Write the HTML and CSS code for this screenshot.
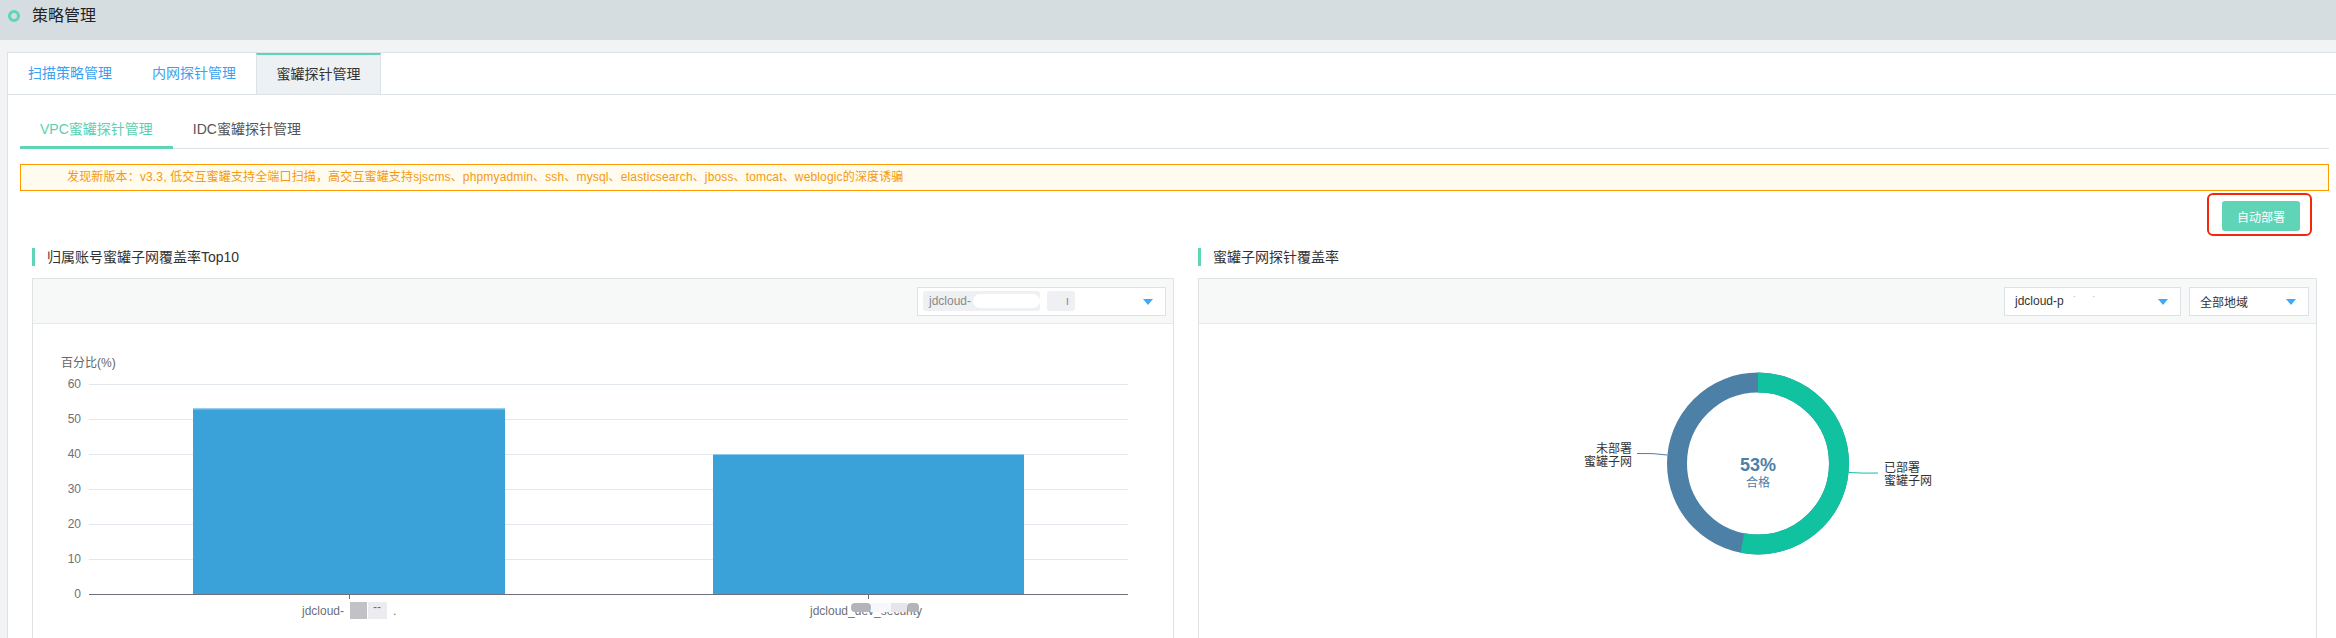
FILE: index.html
```html
<!DOCTYPE html>
<html lang="zh-CN">
<head>
<meta charset="utf-8">
<title>策略管理</title>
<link rel="stylesheet" href="styles.css">
</head>
<body>
<header class="topbar">
  <span class="dot"></span>
  <span class="page-title">策略管理</span>
</header>
<div class="page">
  <div class="card">
    <nav class="tabs">
      <div class="tab">扫描策略管理</div>
      <div class="tab">内网探针管理</div>
      <div class="tab active">蜜罐探针管理</div>
    </nav>
    <div class="card-body">
      <div class="subtabs">
        <div class="subtab active">VPC蜜罐探针管理</div>
        <div class="subtab">IDC蜜罐探针管理</div>
      </div>
      <div class="alert">发现新版本：v3.3, 低交互蜜罐支持全端口扫描，高交互蜜罐支持sjscms、phpmyadmin、ssh、mysql、elasticsearch、jboss、tomcat、weblogic的深度诱骗</div>
      <div class="actions">
        <div class="highlight"><button class="btn">自动部署</button></div>
      </div>
      <div class="charts">
        <section class="chart-col">
          <h3 class="sec-title">归属账号蜜罐子网覆盖率Top10</h3>
          <div class="panel">
            <div class="panel-head">
              <div class="select select-wide">
                <span class="chip chip-main">jdcloud-<span class="smear"></span></span>
                <span class="chip chip-small">ı</span>
                <span class="arrow"></span>
              </div>
            </div>
            <div class="panel-body">
              <svg class="chart" width="1140" height="320" viewBox="0 0 1140 320">
                <text class="axis-name" x="28" y="43">百分比(%)</text>
                <g class="grid">
                  <line x1="56" y1="60.5" x2="1095" y2="60.5"/>
                  <line x1="56" y1="95.5" x2="1095" y2="95.5"/>
                  <line x1="56" y1="130.5" x2="1095" y2="130.5"/>
                  <line x1="56" y1="165.5" x2="1095" y2="165.5"/>
                  <line x1="56" y1="200.5" x2="1095" y2="200.5"/>
                  <line x1="56" y1="235.5" x2="1095" y2="235.5"/>
                </g>
                <g class="ylabels">
                  <text x="48" y="64">60</text>
                  <text x="48" y="99">50</text>
                  <text x="48" y="134">40</text>
                  <text x="48" y="169">30</text>
                  <text x="48" y="204">20</text>
                  <text x="48" y="239">10</text>
                  <text x="48" y="274">0</text>
                </g>
                <rect class="bar" x="160" y="84.5" width="312" height="185.5"/>
                <line class="bar-edge" x1="160" y1="85" x2="472" y2="85"/>
                <rect class="bar" x="680" y="130" width="311" height="140"/>
                <line class="bar-edge" x1="680" y1="130.5" x2="991" y2="130.5"/>
                <line class="axis" x1="56" y1="270.5" x2="1095" y2="270.5"/>
                <line class="axis" x1="316.5" y1="270" x2="316.5" y2="275"/>
                <line class="axis" x1="835.5" y1="270" x2="835.5" y2="275"/>
                <text class="xlabel" x="269" y="291">jdcloud-</text>
                <rect x="317" y="278" width="17" height="17" fill="#c2c2c6"/>
                <rect x="335" y="278" width="19" height="17" fill="#ececf0"/>
                <text class="xlabel" x="340" y="287">--</text>
                <text class="xlabel" x="360" y="291">.</text>
                <text class="xlabel" x="777" y="291">jdcloud_dev_security</text>
                <rect x="818" y="279" width="20" height="9" rx="4" fill="#b4b4b8"/>
                <rect x="838" y="279" width="20" height="9" fill="#f8f8fa"/>
                <rect x="858" y="279" width="16" height="9" fill="#e6e6ea"/>
                <rect x="874" y="279" width="12" height="9" rx="4" fill="#b4b4b8"/>
              </svg>
            </div>
          </div>
        </section>
        <section class="chart-col">
          <h3 class="sec-title">蜜罐子网探针覆盖率</h3>
          <div class="panel">
            <div class="panel-head">
              <div class="select select-acct">
                <span class="sel-text">jdcloud-p<span class="faint"> ˙ ˙</span></span>
                <span class="arrow"></span>
              </div>
              <div class="select select-region">
                <span class="sel-text">全部地域</span>
                <span class="arrow"></span>
              </div>
            </div>
            <div class="panel-body">
              <svg class="chart" width="1117" height="320" viewBox="0 0 1117 320">
                <circle class="ring ring-blue" cx="559" cy="139.5" r="81"/>
                <circle class="ring ring-green" cx="559" cy="139.5" r="81" stroke-dasharray="269.74 508.94" transform="rotate(-90 559 139.5)"/>
                <path class="lead lead-blue" d="M468 131 Q455 129 438 129.5"/>
                <path class="lead lead-green" d="M650 148.5 Q665 149.5 679 149"/>
                <text class="pie-label" text-anchor="end" x="433" y="129">未部署</text>
                <text class="pie-label" text-anchor="end" x="433" y="142">蜜罐子网</text>
                <text class="pie-label" x="685" y="148">已部署</text>
                <text class="pie-label" x="685" y="161">蜜罐子网</text>
                <text class="pie-value" text-anchor="middle" x="559" y="147">53%</text>
                <text class="pie-sub" text-anchor="middle" x="559" y="163">合格</text>
              </svg>
            </div>
          </div>
        </section>
      </div>
    </div>
  </div>
</div>
</body>
</html>
```

FILE: styles.css
```css
* { box-sizing: border-box; }
html, body { margin: 0; padding: 0; }
body {
  width: 2336px;
  height: 638px;
  overflow: hidden;
  background: #f2f3f5;
  font-family: "Liberation Sans", "Noto Sans CJK SC", sans-serif;
  color: #333;
}
.topbar {
  height: 40px;
  background: #d6dde0;
  display: flex;
  align-items: center;
  padding: 0 0 8px 8px;
}
.dot {
  width: 12px;
  height: 12px;
  border: 3px solid #5dd5b6;
  border-radius: 50%;
  margin-right: 12px;
}
.page-title {
  font-size: 16px;
  color: #222;
  line-height: 18px;
}
.page { padding: 12px 0 0 7px; }
.card {
  width: 2335px;
  height: 600px;
  background: #fff;
  border: 1px solid #dbe2e8;
}
.tabs {
  display: flex;
  height: 42px;
  border-bottom: 1px solid #dbe2e8;
}
.tab {
  width: 124px;
  text-align: center;
  font-size: 14px;
  line-height: 41px;
  color: #3ba1f0;
}
.tab.active {
  width: 125px;
  background: #edf1f4;
  color: #333;
  border-top: 2px solid #5dd5b6;
  border-left: 1px solid #dbe2e8;
  border-right: 1px solid #dbe2e8;
  line-height: 38px;
}
.card-body { padding: 12px 12px 0; }
.subtabs {
  display: flex;
  border-bottom: 1px solid #dbe2e8;
}
.subtab {
  padding: 14px 20px 9px;
  line-height: 16px;
  font-size: 14px;
  color: #555;
  border-bottom: 3px solid transparent;
  margin-bottom: -1px;
}
.subtab.active {
  color: #5ccfb1;
  border-bottom-color: #5dd5b6;
}
.alert {
  margin-top: 15px;
  height: 27px;
  border: 1px solid #ff9a00;
  background: #fffbee;
  color: #f59a12;
  font-size: 12px;
  line-height: 25px;
  padding-left: 46px;
  letter-spacing: 0.15px;
  white-space: nowrap;
}
.actions {
  display: flex;
  justify-content: flex-end;
  padding-right: 17px;
  margin-top: 2px;
}
.highlight {
  border: 2px solid #f5260b;
  border-radius: 6px;
  padding: 6px 10px 3px 13px;
}
.btn {
  display: block;
  width: 78px;
  height: 30px;
  border: none;
  border-radius: 3px;
  background: #5fd4b6;
  color: #fff;
  font-family: "Liberation Sans", "Noto Sans CJK SC", sans-serif;
  font-size: 12px;
  padding: 0;
}
.charts {
  display: grid;
  grid-template-columns: 1142px 1119px;
  column-gap: 24px;
  padding-left: 12px;
  margin-top: 12px;
}
.sec-title {
  margin: 0 0 12px;
  height: 18px;
  line-height: 18px;
  border-left: 3px solid #5dd5b6;
  padding-left: 12px;
  font-size: 14px;
  font-weight: normal;
  color: #333;
}
.panel {
  border: 1px solid #dfe3e6;
  height: 400px;
}
.panel-head {
  height: 45px;
  background: #f7f8f8;
  border-bottom: 1px solid #e6e9eb;
  display: flex;
  justify-content: flex-end;
  align-items: center;
  gap: 8px;
  padding-right: 7px;
}
.select {
  height: 29px;
  background: #fff;
  border: 1px solid #dbe2e8;
  display: flex;
  align-items: center;
  position: relative;
  font-size: 12px;
}
.select-wide { width: 249px; padding-left: 5px; }
.select-acct { width: 177px; padding-left: 10px; }
.select-region { width: 120px; padding-left: 10px; }
.chip {
  height: 20px;
  line-height: 20px;
  background: #eef0f3;
  border-radius: 3px;
  color: #8a8a8a;
  display: flex;
  align-items: center;
}
.chip-main { width: 117px; padding-left: 6px; }
.smear {
  width: 70px;
  height: 14px;
  margin-left: 2px;
  background: #fff;
  border-radius: 7px;
}
.chip-small {
  width: 28px;
  margin-left: 7px;
  justify-content: flex-end;
  padding-right: 6px;
}
.sel-text { color: #333; }
.faint { color: #bbb; letter-spacing: 6px; }
.arrow {
  position: absolute;
  right: 12px;
  top: 11px;
  width: 0;
  height: 0;
  border-left: 5.5px solid transparent;
  border-right: 5.5px solid transparent;
  border-top: 6px solid #3fa9f5;
}
.chart { display: block; font-family: "Liberation Sans", "Noto Sans CJK SC", sans-serif; }
.axis-name { font-size: 12px; fill: #666; }
.grid line { stroke: #e3e8ef; stroke-width: 1; }
.ylabels text { font-size: 12px; fill: #6e7079; text-anchor: end; }
.bar { fill: #3ba1d9; }
.bar-edge { stroke: #8fcdee; stroke-width: 1; }
.axis { stroke: #6e7079; stroke-width: 1; }
.xlabel { font-size: 12px; fill: #6e7079; }
.ring { fill: none; stroke-width: 20; }
.ring-blue { stroke: #4d80a7; }
.ring-green { stroke: #10c29f; }
.lead { fill: none; stroke-width: 1; }
.lead-blue { stroke: #4d80a7; }
.lead-green { stroke: #10c29f; }
.pie-label { font-size: 12px; fill: #333; }
.pie-value { font-size: 18px; font-weight: bold; fill: #4d80a7; }
.pie-sub { font-size: 12px; fill: #4d80a7; }
```
